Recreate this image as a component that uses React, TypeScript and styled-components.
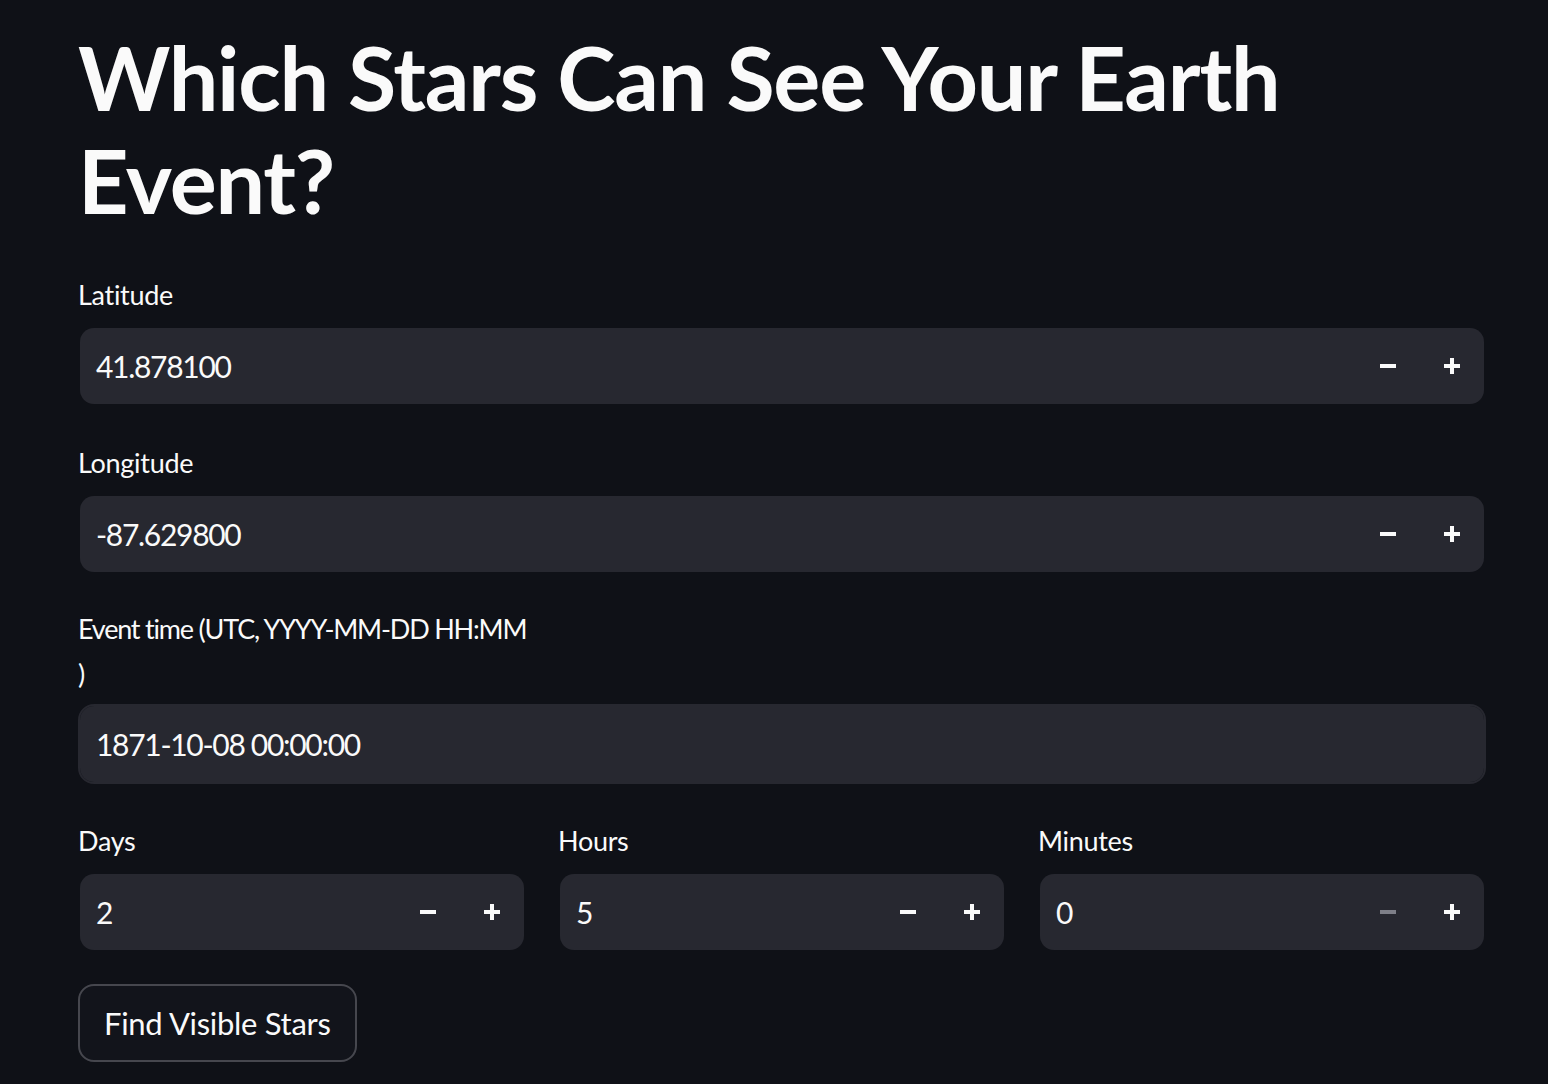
import React from "react";
import styled, { createGlobalStyle } from "styled-components";

const Global = createGlobalStyle`
  html, body {
    margin: 0;
    padding: 0;
    background: #0f1117;
  }
  body {
    font-family: Lato, "Noto Sans", "Liberation Sans", sans-serif;
    color: #fafafa;
  }
  * { box-sizing: border-box; }
`;

const Page = styled.main`
  padding: 26px 62px 40px 78px;
`;

const Column = styled.div`
  width: 1408px;
  display: flex;
  flex-direction: column;
  gap: 32px;
`;

const Title = styled.h1`
  margin: 0 0 6px;
  font-size: 88px;
  line-height: 103px;
  font-weight: 700;
  letter-spacing: -1.2px;
  color: #fafafa;
`;

const Field = styled.div`
  display: flex;
  flex-direction: column;
`;

const Label = styled.label`
  display: flex;
  align-items: center;
  min-height: 48px;
  margin-bottom: 8px;
  font-size: 27px;
  line-height: 45px;
  letter-spacing: -0.3px;
  color: #fafafa;
`;

const LabelText = styled.span<{ $tight?: boolean }>`
  display: block;
  letter-spacing: ${(p) => (p.$tight ? "-1.2px" : "inherit")};
`;

const Box = styled.div<{ $full?: boolean }>`
  display: flex;
  align-items: center;
  height: 80px;
  border-radius: 16px;
  background: #272830;
  background-clip: padding-box;
  border: 2px solid ${(p) => (p.$full ? "#272830" : "transparent")};
`;

const Value = styled.span`
  flex: 1;
  padding-left: 16px;
  font-size: 30px;
  letter-spacing: -1.3px;
  color: #fafafa;
  white-space: nowrap;
`;

const StepButton = styled.button<{ $disabled?: boolean }>`
  width: 64px;
  height: 100%;
  display: flex;
  align-items: center;
  justify-content: center;
  border: none;
  background: transparent;
  padding: 0;
  color: ${(p) => (p.$disabled ? "#7e7f88" : "#fafafa")};
  cursor: pointer;
`;

const Row = styled.div`
  display: grid;
  grid-template-columns: repeat(3, 1fr);
  gap: 32px;
`;

const Submit = styled.button`
  align-self: flex-start;
  height: 78px;
  padding: 0 24px;
  border: 2px solid #46474e;
  border-radius: 16px;
  background: #12141b;
  color: #fafafa;
  font-family: Lato, "Noto Sans", sans-serif;
  font-size: 31px;
  letter-spacing: -0.3px;
  cursor: pointer;
`;

const Minus = () => (
  <svg width="16" height="16" viewBox="0 0 16 16">
    <rect x="0" y="6" width="16" height="4" fill="currentColor" />
  </svg>
);

const Plus = () => (
  <svg width="16" height="16" viewBox="0 0 16 16">
    <rect x="0" y="6" width="16" height="4" fill="currentColor" />
    <rect x="6" y="0" width="4" height="16" fill="currentColor" />
  </svg>
);

const NumberField = ({
  label,
  value,
  minDisabled,
}: {
  label: string;
  value: string;
  minDisabled?: boolean;
}) => (
  <Field>
    <Label>{label}</Label>
    <Box>
      <Value>{value}</Value>
      <StepButton $disabled={minDisabled} aria-label="decrement">
        <Minus />
      </StepButton>
      <StepButton aria-label="increment">
        <Plus />
      </StepButton>
    </Box>
  </Field>
);

export default function App() {
  return (
    <>
      <Global />
      <Page>
        <Column>
          <Title>
            Which Stars Can See Your Earth
            <br />
            Event?
          </Title>
          <NumberField label="Latitude" value="41.878100" />
          <NumberField label="Longitude" value="-87.629800" />
          <Field>
            <Label>
              <div>
                <LabelText $tight>Event time (UTC, YYYY-MM-DD HH:MM</LabelText>
                <LabelText>)</LabelText>
              </div>
            </Label>
            <Box $full>
              <Value>1871-10-08 00:00:00</Value>
            </Box>
          </Field>
          <Row>
            <NumberField label="Days" value="2" />
            <NumberField label="Hours" value="5" />
            <NumberField label="Minutes" value="0" minDisabled />
          </Row>
          <Submit>Find Visible Stars</Submit>
        </Column>
      </Page>
    </>
  );
}
